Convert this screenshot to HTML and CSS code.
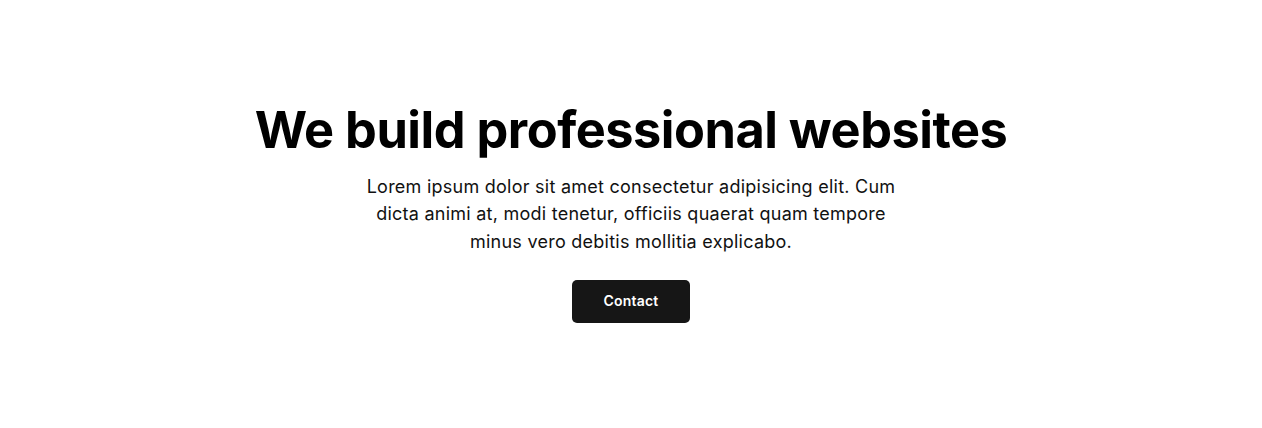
FILE: index.html
```html
<!DOCTYPE html>
<html lang="en">
<head>
<meta charset="utf-8">
<title>We build professional websites</title>
<link rel="stylesheet" href="styles.css">
</head>
<body>
<main class="hero">
  <h1 class="hero-title">We build professional websites</h1>
  <p class="hero-text">Lorem ipsum dolor sit amet consectetur adipisicing elit. Cum dicta animi at, modi tenetur, officiis quaerat quam tempore minus vero debitis mollitia explicabo.</p>
  <a class="hero-button" href="#">Contact</a>
</main>
</body>
</html>
```
FILE: styles.css
```css
* { box-sizing: border-box; }
html, body { margin: 0; padding: 0; background: #fff; }
body { font-family: Inter, "Noto Sans", sans-serif; color: #000; }
.hero {
  min-height: 100vh;
  display: flex;
  flex-direction: column;
  align-items: center;
  justify-content: center;
  text-align: center;
  padding-bottom: 5px;
}
.hero-title {
  margin: 0;
  font-size: 50.5px;
  font-weight: 700;
  line-height: 1.2;
  letter-spacing: -0.5px;
}
.hero-text {
  margin: 12px 0 0;
  max-width: 545px;
  font-size: 18px;
  line-height: 27.5px;
  font-weight: 400;
  letter-spacing: 0.25px;
  color: #111;
}
.hero-button {
  margin-top: 25px;
  width: 118px;
  height: 43px;
  padding-bottom: 3px;
  display: flex;
  align-items: center;
  justify-content: center;
  background: #161616;
  color: #fff;
  border-radius: 5px;
  font-size: 14px;
  font-weight: 600;
  letter-spacing: 0.2px;
  text-decoration: none;
}
```
